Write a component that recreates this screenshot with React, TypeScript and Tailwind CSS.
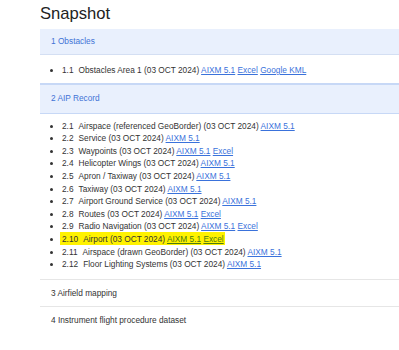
import React from 'react';

interface Item {
  num: string;
  label: string;
  links: string[];
  marked?: boolean;
}

const obstacles: Item[] = [
  { num: '1.1', label: 'Obstacles Area 1 (03 OCT 2024)', links: ['AIXM 5.1', 'Excel', 'Google KML'] },
];

const aipRecord: Item[] = [
  { num: '2.1', label: 'Airspace (referenced GeoBorder) (03 OCT 2024)', links: ['AIXM 5.1'] },
  { num: '2.2', label: 'Service (03 OCT 2024)', links: ['AIXM 5.1'] },
  { num: '2.3', label: 'Waypoints (03 OCT 2024)', links: ['AIXM 5.1', 'Excel'] },
  { num: '2.4', label: 'Helicopter Wings (03 OCT 2024)', links: ['AIXM 5.1'] },
  { num: '2.5', label: 'Apron / Taxiway (03 OCT 2024)', links: ['AIXM 5.1'] },
  { num: '2.6', label: 'Taxiway (03 OCT 2024)', links: ['AIXM 5.1'] },
  { num: '2.7', label: 'Airport Ground Service (03 OCT 2024)', links: ['AIXM 5.1'] },
  { num: '2.8', label: 'Routes (03 OCT 2024)', links: ['AIXM 5.1', 'Excel'] },
  { num: '2.9', label: 'Radio Navigation (03 OCT 2024)', links: ['AIXM 5.1', 'Excel'] },
  { num: '2.10', label: 'Airport (03 OCT 2024)', links: ['AIXM 5.1', 'Excel'], marked: true },
  { num: '2.11', label: 'Airspace (drawn GeoBorder) (03 OCT 2024)', links: ['AIXM 5.1'] },
  { num: '2.12', label: 'Floor Lighting Systems (03 OCT 2024)', links: ['AIXM 5.1'] },
];

const Row: React.FC<{ item: Item }> = ({ item }) => {
  const body = (
    <>
      <span className="mr-[5px]">{item.num}</span>
      {item.label}
      {item.links.map((l) => (
        <React.Fragment key={l}>
          {' '}
          <a
            href="#"
            className={item.marked ? 'underline text-[#4a7a12]' : 'underline text-[#3a72db]'}
          >
            {l}
          </a>
        </React.Fragment>
      ))}
    </>
  );

  return (
    <li className="leading-[12.6px]">
      {item.marked ? (
        <span className="bg-[#fff200] -ml-[2px] pl-[2px] pr-[1px] pt-[2px] pb-[1px]">{body}</span>
      ) : (
        body
      )}
    </li>
  );
};

export default function App() {
  return (
    <div className="min-h-[350px] bg-white text-[#333] font-['Liberation_Sans',Arial,sans-serif] overflow-hidden">
      <h1 className="ml-[40px] pt-[4px] pb-[5px] text-[16.6px] leading-[20px] text-[#222]">
        Snapshot
      </h1>

      <div className="ml-[40px] text-[8.3px]">
        <div className="h-[26px] flex items-center pl-[11px] bg-[#e9f0fd] border-b border-[#d4dff3] text-[#3f73d6]">
          1 Obstacles
        </div>
        <ul className="list-disc pl-[22px] pt-[9px] pb-[6px]">
          {obstacles.map((it) => (
            <Row key={it.num} item={it} />
          ))}
        </ul>

        <div className="h-[31px] flex items-center pl-[11px] bg-[#e9f0fd] border-t-2 border-b border-[#c7d8f6] text-[#3f73d6]">
          2 AIP Record
        </div>
        <ul className="list-disc pl-[22px] pt-[6px] pb-[8px]">
          {aipRecord.map((it) => (
            <Row key={it.num} item={it} />
          ))}
        </ul>

        <div className="h-[27px] flex items-center pl-[11px] border-t border-[#e6e6e6]">
          3 Airfield mapping
        </div>
        <div className="h-[27px] flex items-center pl-[11px] border-t border-[#e6e6e6]">
          4 Instrument flight procedure dataset
        </div>
      </div>
    </div>
  );
}
